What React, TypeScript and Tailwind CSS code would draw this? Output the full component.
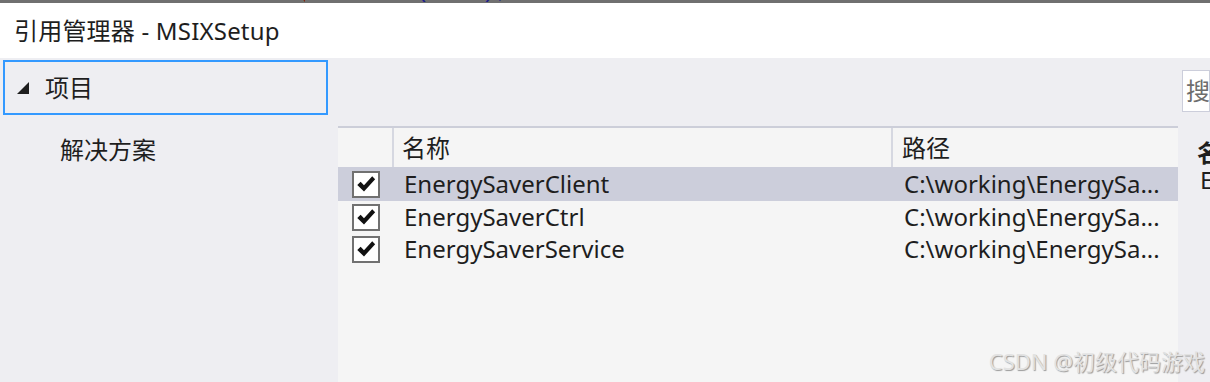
import React from 'react'

const font = "font-['Segoe_UI','Noto_Sans','Noto_Sans_CJK_SC',sans-serif]"

interface Project {
    name: string
    path: string
    selected?: boolean
}

const projects: Project[] = [
    { name: 'EnergySaverClient', path: 'C:\\working\\EnergySa...', selected: true },
    { name: 'EnergySaverCtrl', path: 'C:\\working\\EnergySa...' },
    { name: 'EnergySaverService', path: 'C:\\working\\EnergySa...' },
]

function CheckBox() {
    return (
        <div className="w-[28px] h-[27px] border-2 border-[#717171] bg-white flex items-center justify-center">
            <svg width="20" height="18" viewBox="0 0 19 17">
                <path d="M1.2 9.4 L4.4 6.4 L7.6 9.8 L15.4 1.2 L18.2 4 L7.6 15.6 Z" fill="#111" />
            </svg>
        </div>
    )
}

function ProjectRow({ project }: { project: Project }) {
    return (
        <div className={`flex items-center ${project.selected ? 'h-[34px] bg-[#cccedb]' : 'h-[32px]'}`}>
            <div className="w-[58px] shrink-0 pl-[14px]">
                <CheckBox />
            </div>
            <div className="w-[499px] shrink-0 pl-[8px] truncate">{project.name}</div>
            <div className="flex-1 pl-[9px] truncate">{project.path}</div>
        </div>
    )
}

export default function App() {
    return (
        <div className={`w-[1210px] h-[382px] overflow-hidden flex flex-col relative text-[#1e1e1e] ${font}`}>
            {/* clipped editor text behind the dialog */}
            <div className="h-[3px] shrink-0 bg-[#707070] overflow-hidden">
                <div className="h-[24px] -mt-[19px] flex text-[22px] leading-[22px] font-['Liberation_Mono',monospace] whitespace-nowrap">
                    <span className="ml-[73px] w-[232px] text-[#8b1a1a] overflow-hidden">ref.GetConnection(); refFromSource</span>
                    <span className="ml-[45px] w-[165px] text-[#1a1a8b] overflow-hidden">l.Add(item); Inject</span>
                </div>
            </div>

            <div className="h-[55px] shrink-0 bg-white flex items-center pl-[14px] text-[24px] tracking-[0.2px]">
                引用管理器 - MSIXSetup
            </div>

            <div className="flex-1 flex bg-[#eeeef2] text-[24px]">
                {/* left navigation */}
                <div className="w-[338px] shrink-0 pl-[3px] pt-[2px]">
                    <div className="w-[325px] h-[55px] border-2 border-[#3399ff] flex items-center pl-[11px]">
                        <svg width="14" height="14" viewBox="0 0 14 14" className="mr-[15px]">
                            <path d="M13 1 L13 13 L1 13 Z" fill="#1e1e1e" />
                        </svg>
                        <span>项目</span>
                    </div>
                    <div className="h-[70px] flex items-center pl-[57px]">解决方案</div>
                </div>

                {/* project table */}
                <div className="w-[840px] shrink-0 pt-[68px] flex flex-col">
                    <div className="flex-1 bg-[#f5f5f5] border-t-2 border-[#ccced9]">
                        <div className="h-[39px] flex">
                            <div className="w-[56px] shrink-0 border-r-2 border-[#d6d8e1]" />
                            <div className="w-[499px] shrink-0 border-r-2 border-[#d6d8e1] pl-[8px] flex items-center">名称</div>
                            <div className="flex-1 pl-[9px] flex items-center">路径</div>
                        </div>
                        {projects.map((p) => (
                            <ProjectRow key={p.name} project={p} />
                        ))}
                    </div>
                </div>

                {/* details side */}
                <div className="flex-1 pl-[4px] pt-[12px] overflow-hidden">
                    <div className="h-[42px] bg-white border border-[#cccedb] flex items-center pl-[3px] text-[#6d6d6d] whitespace-nowrap">
                        搜索(Ctrl+E)
                    </div>
                    <div className="pl-[15px] pt-[26px] font-bold leading-[30px] whitespace-nowrap">名称:</div>
                    <div className="pl-[18px] leading-[24px] whitespace-nowrap">EnergySaverClient</div>
                </div>
            </div>

            <div className="absolute right-[5px] bottom-[8px] text-[22px] leading-[26px] text-[#e2e2e2] [text-shadow:1px_1px_1px_#9a9a9a] whitespace-nowrap">
                CSDN @初级代码游戏
            </div>
        </div>
    )
}
